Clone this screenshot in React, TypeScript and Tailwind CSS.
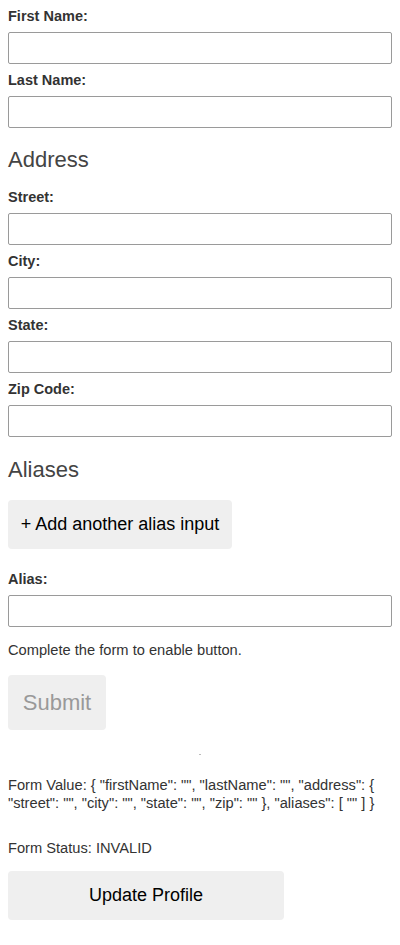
import { useState } from "react"

type Profile = {
    firstName: string
    lastName: string
    address: { street: string; city: string; state: string; zip: string }
    aliases: string[]
}

const labelCls = "block mt-[8px] mb-[8px] text-[14.5px] leading-[16px] font-bold text-[#333]"
const inputCls = "block w-full h-[32px] border border-[#9a9a9a] rounded-[2px] bg-white px-1 text-[14px] outline-none"
const headingCls = "text-[22px] leading-[25px] font-normal text-[#444]"

function Field({ label, value, onChange }: { label: string; value: string; onChange: (v: string) => void }) {
    return (
        <div>
            <label className={labelCls}>{label}</label>
            <input className={inputCls} value={value} onChange={(e) => onChange(e.target.value)}/>
        </div>
    )
}

export default function App() {
    const [form, setForm] = useState<Profile>({
        firstName: "",
        lastName: "",
        address: { street: "", city: "", state: "", zip: "" },
        aliases: [""],
    })

    const setAddress = (key: keyof Profile["address"], v: string) =>
        setForm({ ...form, address: { ...form.address, [key]: v } })

    const valid = form.firstName !== "" && form.lastName !== ""

    const formValue = `{ "firstName": "${form.firstName}", "lastName": "${form.lastName}", "address": { "street": "${form.address.street}", "city": "${form.address.city}", "state": "${form.address.state}", "zip": "${form.address.zip}" }, "aliases": [ ${form.aliases.map((a) => `"${a}"`).join(", ")} ] }`

    return (
        <div className="min-h-screen bg-white px-2 pt-px text-[#333]" style={{ fontFamily: '"Liberation Sans", Arial, sans-serif' }}>
            <form onSubmit={(e) => e.preventDefault()} className="-mt-px">
                <Field label="First Name:" value={form.firstName} onChange={(v) => setForm({ ...form, firstName: v })}/>
                <Field label="Last Name:" value={form.lastName} onChange={(v) => setForm({ ...form, lastName: v })}/>

                <div>
                    <h2 className={`${headingCls} mt-[19px] mb-[17px]`}>Address</h2>
                    <Field label="Street:" value={form.address.street} onChange={(v) => setAddress("street", v)}/>
                    <Field label="City:" value={form.address.city} onChange={(v) => setAddress("city", v)}/>
                    <Field label="State:" value={form.address.state} onChange={(v) => setAddress("state", v)}/>
                    <Field label="Zip Code:" value={form.address.zip} onChange={(v) => setAddress("zip", v)}/>
                </div>

                <div>
                    <h2 className={`${headingCls} mt-[20px] mb-[18px]`}>Aliases</h2>
                    <button
                        type="button"
                        onClick={() => setForm({ ...form, aliases: [...form.aliases, ""] })}
                        className="block w-[224px] h-[49px] rounded-[4px] bg-[#efefef] text-[18px] text-black mb-[22px]"
                    >
                        + Add another alias input
                    </button>
                    {form.aliases.map((alias, i) => (
                        <Field
                            key={i}
                            label="Alias:"
                            value={alias}
                            onChange={(v) => setForm({ ...form, aliases: form.aliases.map((a, j) => (j === i ? v : a)) })}
                        />
                    ))}
                </div>

                <p className="mt-[15px] text-[14.67px] leading-[17px] text-[#333]">Complete the form to enable button.</p>

                <button
                    type="submit"
                    disabled={!valid}
                    className="block mt-[16px] w-[98px] h-[55px] rounded-[4px] bg-[#efefef] text-[22px] text-[#999]"
                >
                    Submit
                </button>
            </form>

            <div className="flex justify-center mt-[24px]">
                <div className="w-[2px] h-[1px] bg-[#bbb]"></div>
            </div>

            <p className="mt-[21px] text-[14.67px] leading-[18px] text-[#333]">{`Form Value: ${formValue}`}</p>

            <p className="mt-[27px] text-[14.67px] leading-[18px] text-[#333]">{`Form Status: ${valid ? "VALID" : "INVALID"}`}</p>

            <button type="button" className="block mt-[14px] w-[276px] h-[49px] rounded-[4px] bg-[#efefef] text-[18px] text-black">
                Update Profile
            </button>
        </div>
    )
}
